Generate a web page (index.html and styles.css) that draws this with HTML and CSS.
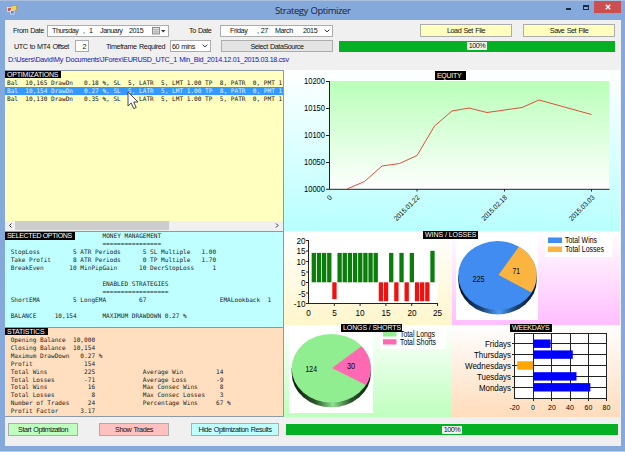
FILE: index.html
```html
<!DOCTYPE html>
<html lang="en">
<head>
  <meta charset="UTF-8">
  <title>Strategy Optimizer</title>
  <link rel="stylesheet" href="styles.css">
</head>
<body>
  <div class="window">
    <header class="titlebar">
      <svg class="app-icon" width="10" height="10" viewBox="0 0 10 10">
        <rect x="4.5" y="0.5" width="5" height="5" fill="#f3cf5b" stroke="#b98a2b" stroke-width=".6"/>
        <rect x="0.5" y="2.5" width="4" height="4" fill="#d3573f" stroke="#fff" stroke-width=".6"/>
        <rect x="3.5" y="5.5" width="3.5" height="3.5" fill="#5d83cc" stroke="#fff" stroke-width=".6"/>
      </svg>
      <h1>Strategy Optimizer</h1>
      <div class="win-buttons">
        <span class="win-btn min"><i></i></span>
        <span class="win-btn max"><i></i></span>
        <span class="win-btn close"><svg width="6" height="6" viewBox="0 0 6 6"><path d="M.8.8l4.4 4.4M5.2.8L.8 5.2" stroke="#fff" stroke-width="1.3"/></svg></span>
      </div>
    </header>

    <main class="client">
      <section class="controls">
        <div class="row row-dates">
          <label class="lbl-from">From Date</label>
          <div class="field date-from">
            <span class="d-day">Thursday</span><span class="d-num">, &nbsp;1</span><span class="d-month">January</span><span class="d-year">2015</span>
            <svg class="cal" width="14" height="8" viewBox="0 0 14 8">
              <rect x=".5" y=".5" width="7" height="6.5" fill="#e2e2e2" stroke="#777" stroke-width=".8"/>
              <path d="M.5 2.5h7M3 2.5v4.5M5 2.5v4.5M.5 4.8h7" stroke="#999" stroke-width=".5"/>
              <path d="M9 3h4.4l-2.2 2.5z" fill="#333"/>
            </svg>
          </div>
          <label class="lbl-to">To Date</label>
          <div class="field date-to">
            <span class="d-day">Friday</span><span class="d-num">, 27</span><span class="d-month">March</span><span class="d-year">2015</span>
            <svg class="chev" width="6" height="4" viewBox="0 0 6 4"><path d="M.8.7L3 2.9 5.2.7" fill="none" stroke="#222"/></svg>
          </div>
          <button class="btn yellow load">Load Set File</button>
          <button class="btn yellow save">Save Set File</button>
        </div>
        <div class="row row-source">
          <label class="lbl-utc">UTC to MT4 Offset</label>
          <div class="field offset">2</div>
          <label class="lbl-tf">Timeframe Required</label>
          <div class="field timeframe">60 mins
            <svg class="chev" width="6" height="4" viewBox="0 0 6 4"><path d="M.8.7L3 2.9 5.2.7" fill="none" stroke="#222"/></svg>
          </div>
          <button class="btn select-ds">Select DataSource</button>
          <div class="progress top"><span>100%</span></div>
        </div>
        <div class="path">D:\Users\David\My Documents\JForex\EURUSD_UTC_1 Min_Bid_2014.12.01_2015.03.18.csv</div>
      </section>

      <section class="panels">
        <div class="left">
          <div class="panel optimizations">
            <span class="tag w-opt">OPTIMIZATIONS</span>
            <ul class="results">
              <li>Bal  10,165 DrawDn   0.18 %, SL  5, LATR  5, LMT 1.00 TP  8, PATR  0, PMT 1</li>
              <li class="selected">Bal  10,154 DrawDn   0.27 %, SL  5, LATR  5, LMT 1.00 TP  8, PATR  0, PMT 1</li>
              <li>Bal  10,130 DrawDn   0.35 %, SL  5, LATR  5, LMT 1.00 TP  5, PATR  0, PMT 1</li>
            </ul>
            <svg class="cursor" width="13" height="19" viewBox="0 0 13 19"><path d="M1 1v14l3.2-3 2.6 5.6 2.4-1.1L6.7 11H11z" fill="#fff" stroke="#333" stroke-width=".9"/></svg>
            <div class="scrollbar">
              <svg width="10" height="9" viewBox="0 0 10 9"><path d="M6.5 2.5L4.5 4.5l2 2" fill="none" stroke="#333"/></svg>
              <div class="track"><div class="thumb"></div></div>
              <svg width="10" height="9" viewBox="0 0 10 9"><path d="M3 2.5l2 2-2 2" fill="none" stroke="#333"/></svg>
            </div>
          </div>
          <div class="panel options">
            <span class="tag w-sel">SELECTED OPTIONS</span>
            <div class="money-title">MONEY MANAGEMENT</div>
<pre>                          ================
 StopLoss         5 ATR Periods      5 SL Multiple   1.00
 Take Profit      8 ATR Periods      0 TP Multiple   1.70
 BreakEven       10 MinPipGain      10 DecrStopLoss     1

                          ENABLED STRATEGIES
                          ==================
 ShortEMA         5 LongEMA         67                    EMALookback  1

 BALANCE     10,154       MAXIMUM DRAWDOWN 0.27 %</pre>
          </div>
          <div class="panel statistics">
            <span class="tag w-stat">STATISTICS</span>
<pre> Opening Balance  10,000
 Closing Balance  10,154
 Maximum DrawDown   0.27 %
 Profit              154
 Total Wins          225             Average Win         14
 Total Losses        -71             Average Loss        -9
 Total Wins           16             Max Consec Wins      8
 Total Losses          8             Max Consec Losses    3
 Number of Trades     24             Percentage Wins     67 %
 Profit Factor      3.17</pre>
          </div>
        </div>

        <div class="right">
          <div class="chart equity">
            <span class="tag t-equity">EQUITY</span>
            <svg width="336" height="161" viewBox="284 70 336 161">
              <defs>
                <linearGradient id="plot" x1="0" y1="0" x2="0" y2="1"><stop offset="0" stop-color="#b9ffb9"/><stop offset="1" stop-color="#fff"/></linearGradient>
              </defs>
              <rect x="330" y="81" width="279" height="108" fill="url(#plot)"/>
              <path d="M329.5 81v108M326 81.5h4M326 108.5h4M326 135.5h4M326 162.5h4M326 189.3h283.5M417 189v2.5M504.5 189v2.5M591.5 189v2.5" stroke="#222" fill="none"/>
              <polyline points="347,189 364.5,181.5 382,166 399.5,163.5 417,155.5 434.5,126 452,111 469,108 487,112.5 522,107.5 539,100 591.5,114.5" fill="none" stroke="#dd3b2c" stroke-width=".9"/>
              <g class="axis end">
                <text x="325" y="84" textLength="21" lengthAdjust="spacingAndGlyphs">10200</text>
                <text x="325" y="111" textLength="21" lengthAdjust="spacingAndGlyphs">10150</text>
                <text x="325" y="138" textLength="21" lengthAdjust="spacingAndGlyphs">10100</text>
                <text x="325" y="165" textLength="21" lengthAdjust="spacingAndGlyphs">10050</text>
                <text x="325" y="192" textLength="21" lengthAdjust="spacingAndGlyphs">10000</text>
              </g>
              <g class="dates end">
                <text transform="translate(332.5 198) rotate(-45)">0</text>
                <text transform="translate(420 198) rotate(-45)" textLength="33" lengthAdjust="spacingAndGlyphs">2015.01.22</text>
                <text transform="translate(507.5 198) rotate(-45)" textLength="33" lengthAdjust="spacingAndGlyphs">2015.02.18</text>
                <text transform="translate(595 198) rotate(-45)" textLength="33" lengthAdjust="spacingAndGlyphs">2015.03.03</text>
              </g>
            </svg>
          </div>

          <div class="chart trades">
            <svg width="168" height="94" viewBox="284 231 168 94">
              <rect x="308" y="240" width="130" height="64" fill="#fff"/>
              <g id="tradeBars"></g>
              <path d="M308.5 240v64M306 240.5h3M306 251h3M306 261.5h3M306 272h3M306 282.5h3M306 293h3M306 303.5h132M334.3 303v3M360.1 303v3M385.9 303v3M411.7 303v3M437.5 303v3" stroke="#222" fill="none"/>
              <g class="axis end">
                <text x="305.5" y="243.5">20</text>
                <text x="305.5" y="254">15</text>
                <text x="305.5" y="264.5">10</text>
                <text x="305.5" y="275.5">5</text>
                <text x="305.5" y="286">0</text>
                <text x="305.5" y="296.5">-5</text>
                <text x="305.5" y="307">-10</text>
              </g>
              <g class="axis mid">
                <text x="308.5" y="315.5">0</text>
                <text x="334.5" y="315.5">5</text>
                <text x="360" y="315.5">10</text>
                <text x="386" y="315.5">15</text>
                <text x="412" y="315.5">20</text>
                <text x="437.5" y="315.5">25</text>
              </g>
            </svg>
          </div>

          <div class="chart wins">
            <span class="tag t-wins">WINS / LOSSES</span>
            <svg width="168" height="94" viewBox="452 231 168 94">
              <defs>
                <linearGradient id="rimBlue"><stop offset="0" stop-color="#06121f"/><stop offset=".3" stop-color="#1b4478"/><stop offset=".52" stop-color="#4d9cf5"/><stop offset=".72" stop-color="#1b4478"/><stop offset="1" stop-color="#06121f"/></linearGradient>
              </defs>
              <rect x="456" y="232" width="82" height="88" fill="#fff"/>
              <rect x="545" y="232" width="67" height="25" fill="#fff"/>
              <path d="M458.2 275v5a39.3 34.5 0 0 0 78.6 0v-5z" fill="url(#rimBlue)"/>
              <ellipse cx="497.5" cy="275.5" rx="39.3" ry="34.5" fill="#418cf0"/>
              <path d="M498.5 275L519 246.5A39.3 34.5 0 0 1 531.5 292.5z" fill="#fcb441"/>
              <rect x="548" y="237.5" width="14" height="5.5" fill="#418cf0"/>
              <rect x="548" y="246.5" width="14" height="5.5" fill="#fcb441"/>
              <g class="axis">
                <text x="472.5" y="281.500" textLength="12" lengthAdjust="spacingAndGlyphs">225</text>
                <text x="512.5" y="274" textLength="7.5" lengthAdjust="spacingAndGlyphs">71</text>
                <text x="565" y="243" textLength="32" lengthAdjust="spacingAndGlyphs">Total Wins</text>
                <text x="565" y="252" textLength="39" lengthAdjust="spacingAndGlyphs">Total Losses</text>
              </g>
            </svg>
          </div>

          <div class="chart longs">
            <span class="tag t-longs">LONGS / SHORTS</span>
            <svg width="168" height="92" viewBox="284 325 168 92">
              <defs>
                <linearGradient id="rimGreen"><stop offset="0" stop-color="#0c1a0c"/><stop offset=".3" stop-color="#2c552c"/><stop offset=".52" stop-color="#8ce08c"/><stop offset=".75" stop-color="#2c552c"/><stop offset="1" stop-color="#0c1a0c"/></linearGradient>
              </defs>
              <rect x="289" y="325" width="84" height="88" fill="#fff"/>
              <rect x="380" y="325" width="66" height="24" fill="#fff"/>
              <path d="M291.7 368v5a39.6 34.3 0 0 0 79.2 0v-5z" fill="url(#rimGreen)"/>
              <ellipse cx="331.3" cy="368.3" rx="39.6" ry="34.3" fill="#90ee90"/>
              <path d="M332 368L361.5 346.3A39.6 34.3 0 0 1 366 385z" fill="#ff69b4"/>
              <rect x="383" y="331.5" width="13.5" height="5" fill="#90ee90"/>
              <rect x="383" y="339.2" width="13.5" height="5.3" fill="#ff69b4"/>
              <g class="axis">
                <text x="305.5" y="372" textLength="11.5" lengthAdjust="spacingAndGlyphs">124</text>
                <text x="347" y="369" textLength="8" lengthAdjust="spacingAndGlyphs">30</text>
                <text x="400" y="336.5" textLength="35" lengthAdjust="spacingAndGlyphs">Total Longs</text>
                <text x="400" y="345" textLength="36" lengthAdjust="spacingAndGlyphs">Total Shorts</text>
              </g>
            </svg>
          </div>

          <div class="chart weekdays">
            <span class="tag t-week">WEEKDAYS</span>
            <svg width="168" height="92" viewBox="452 325 168 92">
              <rect x="514.5" y="333" width="92.5" height="66" fill="#fff"/>
              <path d="M514.5 333v66M533.5 333v68M551.5 333v68M570.5 333v68M588.5 333v68M606.5 333v68M514 333.5h93M512 343.5h95M512 354.5h95M512 365.5h95M512 376.5h95M512 387.5h95M514 398.5h93" stroke="#222" fill="none"/>
              <g id="weekdayBars"></g>
              <g class="days end">
                <text x="511" y="347" textLength="26" lengthAdjust="spacingAndGlyphs">Fridays</text>
                <text x="511" y="358" textLength="37" lengthAdjust="spacingAndGlyphs">Thursdays</text>
                <text x="511" y="369" textLength="46" lengthAdjust="spacingAndGlyphs">Wednesdays</text>
                <text x="511" y="380" textLength="34" lengthAdjust="spacingAndGlyphs">Tuesdays</text>
                <text x="511" y="390.5" textLength="32" lengthAdjust="spacingAndGlyphs">Mondays</text>
              </g>
              <g class="dates mid">
                <text x="514.5" y="409.5">-20</text>
                <text x="533" y="409.5">0</text>
                <text x="552" y="409.5">20</text>
                <text x="570" y="409.5">40</text>
                <text x="588.5" y="409.5">60</text>
                <text x="606.5" y="409.5">80</text>
              </g>
            </svg>
          </div>
        </div>
      </section>

      <footer class="bottom">
        <button class="btn green start">Start Optimization</button>
        <button class="btn pink show">Show Trades</button>
        <button class="btn cyan hide">Hide Optimization Results</button>
        <div class="progress low"><span>100%</span></div>
      </footer>
    </main>
  </div>

  <script>
    function addRect(group, x, y, w, h, fill) {
      const r = document.createElementNS('http://www.w3.org/2000/svg', 'rect');
      r.setAttribute('x', x);
      r.setAttribute('y', y);
      r.setAttribute('width', w);
      r.setAttribute('height', h);
      r.setAttribute('fill', fill);
      group.appendChild(r);
    }

    // profit per trade, green above zero and red below
    const trades = [14, 14, 14, 14, -8, 14, 14, 14, 14, 14, 14, 14, 14, -9, -9, 14, -9, 14, -9, 14, -9, -9, -9, 15];
    const tradeBars = document.getElementById('tradeBars');
    trades.forEach((v, i) => {
      const x = 308.5 + 5.16 * (i + 1) - 2;
      const h = Math.abs(v) * 2.1;
      addRect(tradeBars, x, v > 0 ? 282.3 - h : 282.3, 4.3, h, v > 0 ? '#0a7d0a' : '#f01010');
    });

    // Friday down to Monday
    const weekdays = [19, 43, -17, 47, 62];
    const weekdayBars = document.getElementById('weekdayBars');
    weekdays.forEach((v, i) => {
      const w = Math.abs(v) * 0.925;
      addRect(weekdayBars, v > 0 ? 533 : 533 - w, 339.5 + i * 10.9, w, 8.4, v > 0 ? '#0000ff' : '#ffa500');
    });
  </script>
</body>
</html>
```

FILE: styles.css
```css
* {
  box-sizing: border-box;
}
body {
  margin: 0;
  width: 625px;
  height: 452px;
  overflow: hidden;
  font-family: "Liberation Sans", Arial, sans-serif;
  font-size: 7.2px;
  letter-spacing: -0.44px;
  word-spacing: 0.7px;
  color: #111;
}
.window {
  display: flex;
  flex-direction: column;
  width: 625px;
  height: 452px;
  padding: 0 4px 5px 5px;
  background: #84a9da;
  border-top: 1px solid #a9bfdd;
  border-bottom: 1px solid #b4cbea;
}
.titlebar {
  display: flex;
  height: 19px;
  flex: none;
}
.app-icon {
  margin: 4px 0 0 2px;
}
.titlebar h1 {
  margin: 0 auto 0 258px;
  font: 9.5px/19px "Open Sans", sans-serif;
  letter-spacing: -0.45px;
  color: #17233a;
}
.win-buttons {
  display: flex;
  height: 12px;
}
.win-btn {
  display: flex;
  width: 17px;
  height: 12px;
  align-items: center;
  justify-content: center;
}
.min i {
  width: 5px;
  height: 2px;
  margin-top: 4px;
  background: #1c2a40;
}
.max i {
  width: 6px;
  height: 5px;
  border: 1px solid #1c2a40;
  border-top-width: 2px;
}
.close {
  width: 27px;
  background: #cb4f50;
}

.client {
  display: flex;
  flex-direction: column;
  flex: 1;
  background: #f0f0f0;
}
.controls {
  height: 50px;
  flex: none;
}
.row {
  display: flex;
  align-items: center;
}
.row-dates {
  height: 13px;
  margin-top: 4px;
}
.row-source {
  height: 12px;
  margin-top: 3px;
}
.row label {
  flex: none;
  white-space: nowrap;
}
.lbl-from { width: 42px; padding-left: 8px; }
.lbl-to { width: 31px; margin-left: 20px; }
.lbl-utc { width: 70px; padding-left: 9px; }
.lbl-tf { width: 64px; margin-left: 17px; letter-spacing: -0.38px; }
.field {
  display: flex;
  align-items: center;
  flex: none;
  height: 12px;
  background: #fff;
  border: 1px solid #acacac;
  white-space: nowrap;
}
.chev, .cal {
  margin-left: auto;
}
.date-from { width: 122px; padding: 0 2px 0 4px; }
.date-from .d-day { width: 31px; }
.date-from .d-num { width: 17px; }
.date-from .d-month { width: 29px; }
.date-to { width: 113px; padding: 0 2px 0 9px; }
.date-to .d-day { width: 27px; }
.date-to .d-num { width: 18px; }
.date-to .d-month { width: 28px; }
.offset { width: 14px; justify-content: flex-end; padding-right: 2px; }
.timeframe { width: 41px; padding: 0 2px 0 1px; }

.btn {
  flex: none;
  height: 13px;
  padding: 0;
  font: inherit;
  letter-spacing: inherit;
  word-spacing: inherit;
  color: #111;
  background: #e4e4e4;
  border: 1px solid #acacac;
}
.btn.yellow { background: #ffffc0; }
.btn.green { background: #c0ffc0; }
.btn.pink { background: #ffc0c0; }
.btn.cyan { background: #c0ffff; }
.load { width: 92px; margin-left: 87px; }
.save { width: 92px; margin-left: 11px; }
.select-ds { width: 112px; height: 12px; margin-left: 10px; }

.progress {
  display: flex;
  align-items: center;
  justify-content: center;
  flex: none;
  height: 11px;
  background: #06b025;
}
.progress span {
  padding: 0 2px;
  height: 8px;
  line-height: 8px;
  background: #eef6ee;
}
.progress.top { width: 276px; margin-left: 6px; }
.progress.low { width: 332px; margin: 1px 0 0 7px; }
.path {
  margin-top: 3px;
  padding-left: 3px;
  line-height: 9px;
  letter-spacing: -0.28px;
  color: #1414b4;
  white-space: nowrap;
}

.panels {
  display: grid;
  grid-template-columns: 279px 336px;
  height: 347px;
  flex: none;
}
.left {
  display: grid;
  grid-template-rows: 161px 96px 90px;
}
.panel {
  position: relative;
  min-width: 0;
  overflow: hidden;
  border: solid #8e9aa3;
  border-width: 1px 1px 0 0;
}
.optimizations {
  display: flex;
  flex-direction: column;
  background: #ffffc0;
}
.options { background: #c0ffff; }
.statistics { background: #ffdfbf; border-bottom-width: 1px; }

.tag {
  position: absolute;
  z-index: 1;
  top: 0;
  left: 0;
  height: 7px;
  padding-left: 2px;
  font-size: 7px;
  line-height: 8px;
  word-spacing: 0;
  white-space: nowrap;
  color: #fff;
  background: #000;
}
.w-opt { width: 56px; letter-spacing: -0.2px; }
.w-sel { width: 70px; height: 8px; letter-spacing: -0.35px; }
.w-stat { width: 43px; letter-spacing: -0.2px; }
.t-equity { top: 1px; left: 151px; width: 31px; height: 9px; line-height: 9px; letter-spacing: -0.3px; color: #ffffd0; }
.t-wins { left: -29px; width: 55px; height: 8px; letter-spacing: -0.05px; }
.t-longs { top: -1px; left: 57px; width: 61px; height: 8px; letter-spacing: -0.1px; }
.t-week { top: -1px; left: 58px; width: 42px; height: 8px; letter-spacing: -0.2px; color: #ffffd0; }

.results li, pre, .money-title {
  font: 6.1px/8px "DejaVu Sans Mono", monospace;
  letter-spacing: 0;
  word-spacing: 0;
  white-space: pre;
}
.results {
  margin: 8px 0 0;
  padding: 0;
  list-style: none;
}
.results li {
  height: 8px;
  padding-left: 2px;
}
.results .selected {
  color: #e4f2ff;
  background: #3399ff;
}
pre {
  margin: 0;
  padding-left: 2px;
  color: #141e1e;
}
.money-title { margin-left: 97.5px; color: #141e1e; }
.options pre { line-height: 7.97px; }
.statistics pre { padding-top: 8px; line-height: 7.9px; }
.cursor {
  position: absolute;
  left: 122px;
  top: 20px;
}
.scrollbar {
  display: flex;
  height: 10px;
  margin-top: auto;
  background: #f0f0f0;
}
.track { flex: 1; }
.thumb {
  width: 154px;
  height: 9px;
  background: #cdcdcd;
}

.right {
  display: grid;
  grid-template-columns: 168px 168px;
  grid-template-rows: 161px 94px 92px;
}
.chart {
  position: relative;
  min-width: 0;
}
.chart svg {
  display: block;
  letter-spacing: 0;
  word-spacing: 0;
}
.equity {
  grid-column: 1 / 3;
  background: linear-gradient(#fff, #b8ffff);
}
.trades { background: linear-gradient(#fff, #fff6cc); }
.wins { background: linear-gradient(#fff, #ffbfff); }
.longs { background: linear-gradient(#fff, #bfffbf); }
.weekdays { background: linear-gradient(#fff, #ffdcbc); }
.axis text { font-size: 8.2px; }
.days text { font-size: 8.6px; }
.dates text { font-size: 7px; }
.end text { text-anchor: end; }
.mid text { text-anchor: middle; }

.bottom {
  display: flex;
  padding-top: 6px;
}
.start { width: 70px; margin-left: 3px; }
.show { width: 70px; margin-left: 21px; }
.hide { width: 88px; margin-left: 22px; }
```
